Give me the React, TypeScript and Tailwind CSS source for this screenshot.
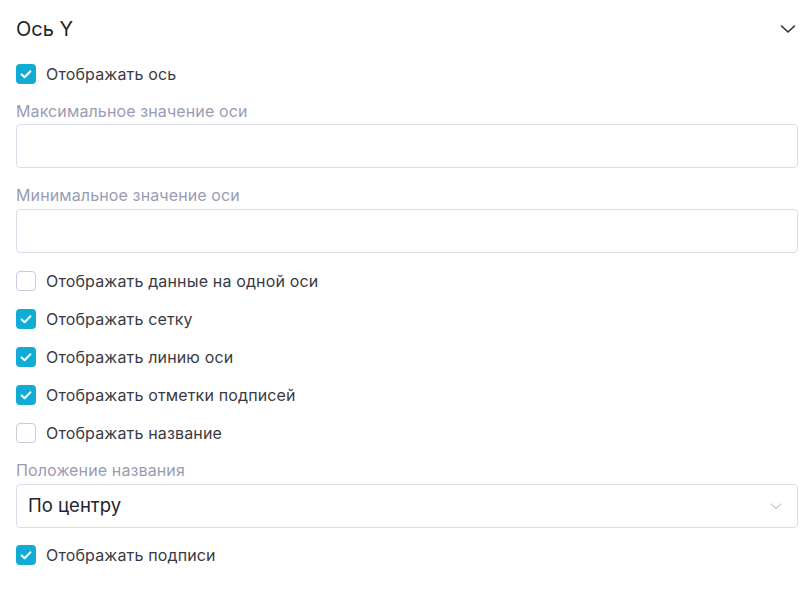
import React from "react";

const Check = ({ checked, label }: { checked: boolean; label: string }) => (
  <div className="flex items-center h-[20px] gap-[10px]">
    {checked ? (
      <div className="w-[20px] h-[20px] rounded-[4px] bg-[#10acd6] flex items-center justify-center">
        <svg width="20" height="20" viewBox="0 0 20 20" fill="none">
          <path d="M5.6 10.4 L8.6 13.2 L14.4 7.2" stroke="white" strokeWidth="2" strokeLinecap="round" strokeLinejoin="round" />
        </svg>
      </div>
    ) : (
      <div className="w-[20px] h-[20px] rounded-[4px] border border-[#c9cadf] bg-white" />
    )}
    <span className="text-[16px] text-[#3a3a44] leading-[20px] tracking-[0.15px]">{label}</span>
  </div>
);

const Field = ({ label, mb }: { label: string; mb: string }) => (
  <div className="flex flex-col">
    <div className={`text-[16px] text-[#9a9bb3] leading-[20px] tracking-[0.12px] ${mb}`}>{label}</div>
    <div className="h-[44px] border border-[#dcdce8] rounded-[4px] bg-white" />
  </div>
);

export default function App() {
  return (
    <div className="w-[810px] h-[595px] bg-white font-['Inter',sans-serif] pl-4 pr-3 pt-[17px]">
      <div className="flex items-center justify-between h-[24px]">
        <span className="text-[20px] text-[#1f1f26] leading-[24px]">Ось Y</span>
        <svg width="18" height="18" viewBox="0 0 18 18" fill="none" className="mr-[1px]">
          <path d="M2.5 6 L9 12 L15.5 6" stroke="#2a2a33" strokeWidth="1.5" strokeLinecap="round" strokeLinejoin="round" />
        </svg>
      </div>
      <div className="mt-[23px]">
        <Check checked label="Отображать ось" />
      </div>
      <div className="mt-[17px]">
        <Field label="Максимальное значение оси" mb="mb-[3px]" />
      </div>
      <div className="mt-[17px]">
        <Field label="Минимальное значение оси" mb="mb-[4px]" />
      </div>
      <div className="mt-[18px] flex flex-col gap-[18px]">
        <Check checked={false} label="Отображать данные на одной оси" />
        <Check checked label="Отображать сетку" />
        <Check checked label="Отображать линию оси" />
        <Check checked label="Отображать отметки подписей" />
        <Check checked={false} label="Отображать название" />
      </div>
      <div className="mt-[17px] flex flex-col">
        <div className="text-[16px] text-[#9a9bb3] leading-[20px] tracking-[0.12px] mb-[4px]">Положение названия</div>
        <div className="h-[44px] border border-[#dcdce8] rounded-[4px] bg-white flex items-center justify-between pl-[11px] pr-[14px]">
          <span className="text-[18.5px] text-[#23232b]">По центру</span>
          <svg width="14" height="14" viewBox="0 0 14 14" fill="none">
            <path d="M2 5 L7 9.5 L12 5" stroke="#c8c9da" strokeWidth="1.2" strokeLinecap="round" strokeLinejoin="round" />
          </svg>
        </div>
      </div>
      <div className="mt-[17px]">
        <Check checked label="Отображать подписи" />
      </div>
    </div>
  );
}
